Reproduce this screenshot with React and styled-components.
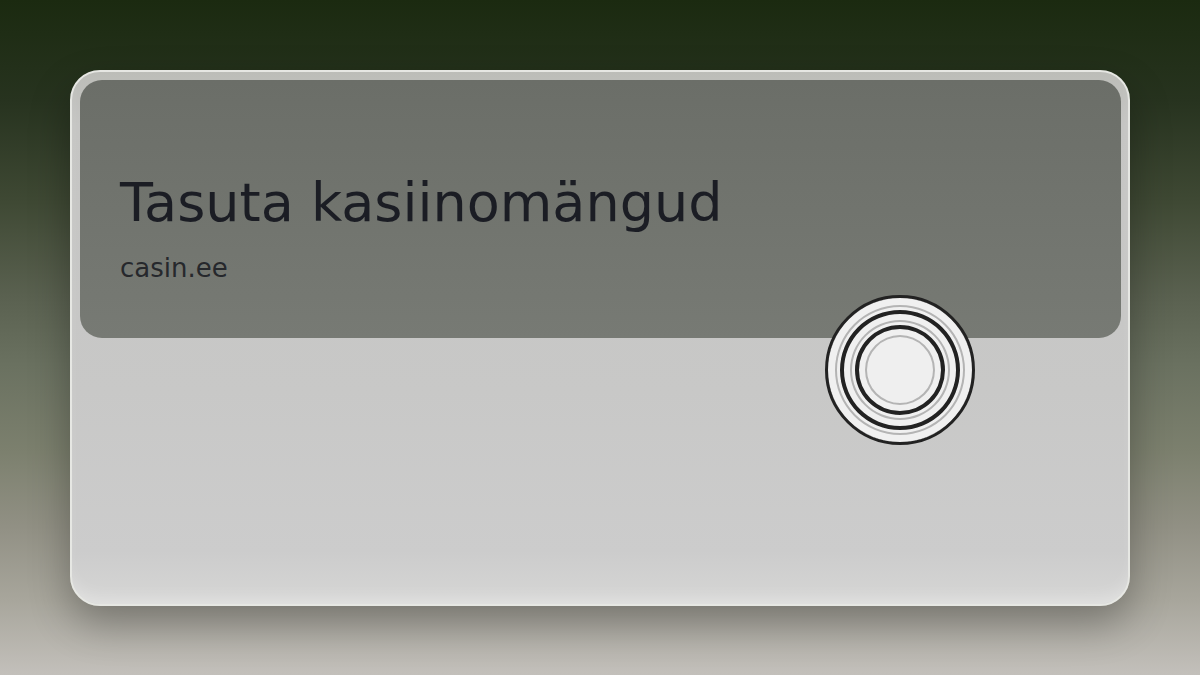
import styled, { createGlobalStyle } from 'styled-components';

const GlobalStyle = createGlobalStyle`
  html, body {
    margin: 0;
    padding: 0;
  }
  body {
    font-family: 'DejaVu Sans', 'Liberation Sans', sans-serif;
  }
`;

const Page = styled.div`
  width: 1200px;
  height: 675px;
  box-sizing: border-box;
  padding: 70px 70px 0;
  background: linear-gradient(
    180deg,
    #1b2a10 0%,
    #27331f 15%,
    #3f4934 30%,
    #5a6150 44%,
    #6a7160 54%,
    #7c806e 67%,
    #919084 78%,
    #a8a69c 89%,
    #c3c0bb 100%
  );
  overflow: hidden;
`;

const Card = styled.div`
  position: relative;
  height: 536px;
  box-sizing: border-box;
  border: 2px solid #e6e7e3;
  border-radius: 30px;
  padding: 8px 7px 8px 8px;
  background: linear-gradient(180deg, #bcbdb8 0%, #c5c5c3 10%, #c8c8c7 60%, #cccccc 90%, #d6d6d5 100%);
  box-shadow: 0 18px 40px rgba(0, 0, 0, 0.3), inset 0 -14px 18px -10px rgba(255, 255, 255, 0.35);
`;

const Header = styled.div`
  height: 258px;
  box-sizing: border-box;
  padding: 91px 40px 0;
  border-radius: 22px;
  background: linear-gradient(180deg, #6b6e68 0%, #777a74 100%);
`;

const Title = styled.h1`
  margin: 0;
  font-size: 54px;
  font-weight: 400;
  line-height: 1.2;
  color: #1b1d24;
`;

const Subtitle = styled.div`
  margin-top: 17px;
  font-size: 26px;
  line-height: 1.2;
  color: #26282c;
`;

const Dial = styled.div`
  position: absolute;
  left: 753px;
  top: 223px;
  width: 150px;
  height: 150px;
  box-sizing: border-box;
  border-radius: 50%;
  border: 3px solid #222;
  background: #efefef;
  box-shadow:
    inset 0 0 0 7px #f0f0f0,
    inset 0 0 0 9px #b4b4b4,
    inset 0 0 0 12px #f0f0f0,
    inset 0 0 0 16px #222,
    inset 0 0 0 22px #f0f0f0,
    inset 0 0 0 24px #b4b4b4,
    inset 0 0 0 27px #f0f0f0,
    inset 0 0 0 31px #222,
    inset 0 0 0 37px #f0f0f0,
    inset 0 0 0 39px #b4b4b4;
`;

export default function App() {
  return (
    <>
      <GlobalStyle />
      <Page>
        <Card>
          <Header>
            <Title>Tasuta kasiinomängud</Title>
            <Subtitle>casin.ee</Subtitle>
          </Header>
          <Dial />
        </Card>
      </Page>
    </>
  );
}
